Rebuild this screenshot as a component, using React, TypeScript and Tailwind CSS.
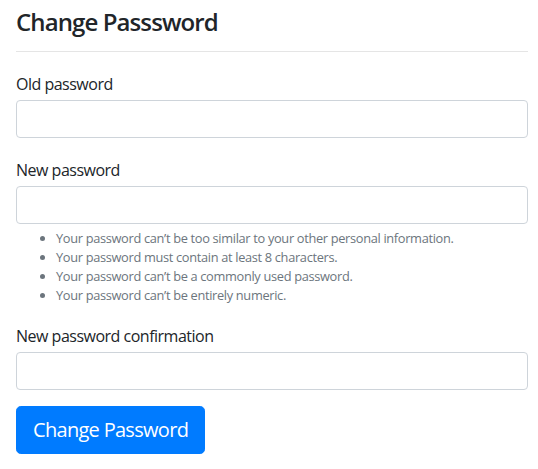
import React from "react";

export default function App() {
  const rules = [
    "Your password can\u2019t be too similar to your other personal information.",
    "Your password must contain at least 8 characters.",
    "Your password can\u2019t be a commonly used password.",
    "Your password can\u2019t be entirely numeric.",
  ];
  return (
    <div
      className="min-h-[469px] bg-white pl-4 pr-[10px] text-[#212529]"
      style={{ fontFamily: '"Segoe UI", "Open Sans", "Noto Sans", sans-serif' }}
    >
      <h4 className="pt-[8px] text-[24px] font-semibold leading-[28.8px] tracking-[-0.9px]">Change Passsword</h4>
      <hr className="mt-[14px] mb-4 border-t border-[rgba(0,0,0,0.1)]" />
      <form>
        <div className="mb-4">
          <label className="mb-1 block pt-1 text-[16px] leading-6 tracking-[-0.5px]">Old password</label>
          <input type="password" className="block h-[38px] w-full rounded-[4px] border border-[#ced4da] px-3" />
        </div>
        <div className="mb-[14px]">
          <label className="mb-1 block pt-1 text-[16px] leading-6 tracking-[-0.5px]">New password</label>
          <input type="password" className="block h-[38px] w-full rounded-[4px] border border-[#ced4da] px-3" />
          <small className="mt-[5px] block text-[12.8px] leading-[19.2px] tracking-[-0.32px] text-[#6c757d]">
            <ul className="mb-0 list-disc pl-10">
              {rules.map((r) => (
                <li key={r}>{r}</li>
              ))}
            </ul>
          </small>
        </div>
        <div className="mb-4">
          <label className="mb-1 block pt-1 text-[16px] leading-6 tracking-[-0.5px]">New password confirmation</label>
          <input type="password" className="block h-[38px] w-full rounded-[4px] border border-[#ced4da] px-3" />
        </div>
        <button
          type="button"
          className="rounded-[4.8px] border border-[#007bff] bg-[#007bff] px-4 py-2 text-[20px] leading-[30px] tracking-[-0.7px] text-white"
        >
          Change Password
        </button>
      </form>
    </div>
  );
}
